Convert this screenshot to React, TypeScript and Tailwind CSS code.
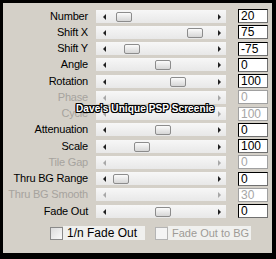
import React from "react";

type Row = { label: string; value: string; thumb?: number; disabled?: boolean };

const rows: Row[] = [
  { label: "Number", value: "20", thumb: 20 },
  { label: "Shift X", value: "75", thumb: 91 },
  { label: "Shift Y", value: "-75", thumb: 28 },
  { label: "Angle", value: "0", thumb: 59 },
  { label: "Rotation", value: "100", thumb: 74 },
  { label: "Phase", value: "0", disabled: true },
  { label: "Cycle", value: "100", disabled: true },
  { label: "Attenuation", value: "0", thumb: 59 },
  { label: "Scale", value: "100", thumb: 38 },
  { label: "Tile Gap", value: "0", disabled: true },
  { label: "Thru BG Range", value: "0", thumb: 17 },
  { label: "Thru BG Smooth", value: "30", disabled: true },
  { label: "Fade Out", value: "0", thumb: 59 },
];

const font = { fontFamily: '"Liberation Sans", Arial, sans-serif' };

function SliderRow({ r }: { r: Row }) {
  const arrowColor = r.disabled ? "#a8a8a8" : "#202020";
  return (
    <div className="flex items-center h-[16.25px]">
      <div
        className={`w-[85px] text-right text-[11px] tracking-[-0.2px] leading-none whitespace-nowrap ${
          r.disabled ? "text-[#a6a39e]" : "text-black"
        }`}
      >
        {r.label}
      </div>
      <div className="relative ml-[8px] w-[130px] h-[13px] bg-gradient-to-b from-[#f7f7f7] to-[#e8e8e8]">
        <svg className="absolute left-[6px] top-[4px]" width="4" height="6" viewBox="0 0 4 6">
          <polygon points="4,0 4,6 1,3" fill={arrowColor} />
        </svg>
        <svg className="absolute right-[4px] top-[4px]" width="4" height="6" viewBox="0 0 4 6">
          <polygon points="0,0 0,6 3,3" fill={arrowColor} />
        </svg>
        {r.thumb !== undefined && (
          <div
            className="absolute top-[2px] w-[16px] h-[10px] rounded-[2px] border border-[#8c8c8c] bg-gradient-to-b from-[#fbfbfb] to-[#d6d6d6]"
            style={{ left: r.thumb }}
          />
        )}
      </div>
      <div
        className={`ml-[12px] w-[30px] h-[14px] bg-white border-t border-l border-b border-r text-[12px] leading-[12px] pl-[2px] ${
          r.disabled
            ? "border-[#a0a0a0] text-[#a6a6a6]"
            : "border-t-black border-l-black border-r-[#707070] border-b-[#707070] text-black"
        }`}
      >
        {r.value}
      </div>
    </div>
  );
}

export default function App() {
  const outline =
    "1px 0 0 #000, -1px 0 0 #000, 0 1px 0 #000, 0 -1px 0 #000, 1px 1px 0 #000, -1px -1px 0 #000, 1px -1px 0 #000, -1px 1px 0 #000";
  return (
    <div className="w-[276px] h-[259px] bg-black pt-[3px] pl-[3px]" style={font}>
      <div className="relative w-[269px] h-[250px] bg-[#d4d0c8] pt-[5px]">
        <div className="flex flex-col">
          {rows.map((r) => (
            <SliderRow key={r.label} r={r} />
          ))}
        </div>
        <div className="flex items-center mt-[7px] h-[14px]">
          <div className="ml-[47px] w-[13px] h-[13px] border border-[#8a8a8a] bg-gradient-to-br from-[#dcdcdc] to-[#fafafa]" />
          <div className="w-[82px] h-[14px] bg-[#f0f0ee] text-[12px] leading-[14px] pl-[4px] text-black whitespace-nowrap">
            1/n Fade Out
          </div>
          <div className="ml-[10px] w-[13px] h-[13px] border border-[#b4b4b4] bg-[#f4f4f4]" />
          <div className="w-[83px] h-[14px] bg-[#f0f0ee] text-[11px] leading-[14px] pl-[4px] text-[#9e9b96] whitespace-nowrap">
            Fade Out to BG
          </div>
        </div>
        <div
          className="absolute left-[73px] top-[101px] text-[10px] font-bold text-white leading-none whitespace-nowrap tracking-[0.1px]"
          style={{ textShadow: outline }}
        >
          Dave's Unique PSP Screenie
        </div>
      </div>
    </div>
  );
}
